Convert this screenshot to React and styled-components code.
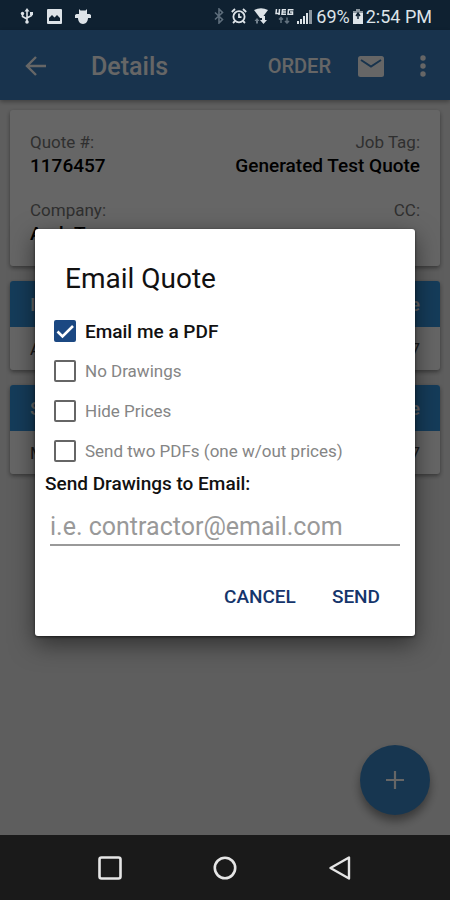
import React, { useState } from 'react';
import styled, { createGlobalStyle } from 'styled-components';

const GlobalStyle = createGlobalStyle`
  * {
    box-sizing: border-box;
  }

  body {
    margin: 0;
    font-family: Roboto, 'Liberation Sans', sans-serif;
    background: #ebebeb;
  }

  button, input {
    font-family: inherit;
  }
`;

const Screen = styled.div`
  display: flex;
  flex-direction: column;
  min-height: 100vh;
`;

const StatusBar = styled.header`
  display: flex;
  align-items: center;
  justify-content: space-between;
  height: 30px;
  padding: 2px 18px 0 20px;
  background: #0f2131;
  color: #dde3e8;
  font-size: 18px;
`;

const StatusGroup = styled.div`
  display: flex;
  align-items: center;
  gap: ${props => props.$gap};

  svg {
    display: block;
  }
`;

const Content = styled.div`
  position: relative;
  display: flex;
  flex: 1;
  flex-direction: column;
  background: #ebebeb;
`;

const AppBar = styled.div`
  display: flex;
  align-items: center;
  height: 70px;
  padding: 2px 11px 0 20px;
  background: #3c80c0;
  color: #fff;
  box-shadow: 0 2px 4px rgba(0, 0, 0, .3);
`;

const IconButton = styled.button`
  display: flex;
  align-items: center;
  justify-content: center;
  width: 32px;
  height: 48px;
  padding: 0;
  border: 0;
  background: none;
  color: inherit;
`;

const PageTitle = styled.h1`
  flex: 1;
  margin: 0 0 0 39px;
  font-size: 25px;
  font-weight: 500;
`;

const BarActions = styled.div`
  display: flex;
  align-items: center;
  gap: 20px;
`;

const OrderButton = styled.button`
  padding: 0 4px;
  border: 0;
  background: none;
  color: inherit;
  font-size: 20px;
  font-weight: 500;
`;

const Cards = styled.main`
  display: flex;
  flex-direction: column;
  gap: 15px;
  padding: 10px;
`;

const Card = styled.section`
  overflow: hidden;
  border-radius: 3px;
  background: #fff;
  box-shadow: 0 2px 4px rgba(0, 0, 0, .4);
`;

const Fields = styled.dl`
  display: grid;
  grid-template-columns: auto auto;
  justify-content: space-between;
  row-gap: 20px;
  margin: 0;
  padding: 20px;
`;

const Field = styled.div`
  min-height: 48px;
  text-align: ${props => props.$align || 'left'};
`;

const FieldLabel = styled.dt`
  color: #777;
  font-size: 17px;
  line-height: 24px;
`;

const FieldValue = styled.dd`
  margin: 0;
  color: #000;
  font-size: 19px;
  font-weight: 500;
  line-height: 24px;
`;

const CardRow = styled.div`
  display: flex;
  align-items: center;
  justify-content: space-between;
  height: 43px;
  padding: 0 20px;
  color: #444;
  font-size: 17px;
`;

const CardHead = styled(CardRow)`
  height: 46px;
  background: #3696e2;
  color: #fff;
  font-size: 19px;
  font-weight: 500;
`;

const AddButton = styled.button`
  position: absolute;
  right: 20px;
  bottom: 20px;
  display: flex;
  align-items: center;
  justify-content: center;
  width: 70px;
  height: 70px;
  border: 0;
  border-radius: 50%;
  background: #3a88c8;
  color: #fff;
  box-shadow: 0 6px 10px rgba(0, 0, 0, .4);
`;

const Scrim = styled.div`
  position: absolute;
  inset: 0;
  display: flex;
  align-items: center;
  justify-content: center;
  padding: 0 35px;
  background: rgba(0, 0, 0, .6);
`;

const Dialog = styled.form`
  width: 100%;
  max-width: 480px;
  padding: 30px 15px 20px 10px;
  border-radius: 3px;
  background: #fff;
  color: #111;
  box-shadow: 0 8px 24px rgba(0, 0, 0, .5), 0 1px 3px rgba(0, 0, 0, .6);
`;

const DialogTitle = styled.h2`
  margin: 0 0 12px 20px;
  font-size: 28px;
  font-weight: 400;
  line-height: 40px;
`;

const Option = styled.label`
  display: flex;
  align-items: center;
  gap: 9px;
  height: 40px;
  padding-left: 9px;
  color: ${props => (props.$main ? '#111' : '#858585')};
  font-size: ${props => (props.$main ? '19px' : '17px')};
  font-weight: ${props => (props.$main ? 500 : 400)};
`;

const Checkbox = styled.input`
  appearance: none;
  flex: none;
  width: 22px;
  height: 22px;
  margin: 0;
  border: 2px solid #666;
  border-radius: 2px;

  &:checked {
    border-color: #1b4882;
    background: #1b4882 url("data:image/svg+xml,%3Csvg xmlns='http://www.w3.org/2000/svg' viewBox='0 0 18 18'%3E%3Cpath d='M1.5 9.5l5 5L17 4' fill='none' stroke='white' stroke-width='2.6'/%3E%3C/svg%3E");
  }
`;

const EmailLabel = styled.label`
  display: block;
  font-size: 19px;
  font-weight: 500;
  line-height: 26px;
`;

const EmailInput = styled.input`
  display: block;
  width: calc(100% - 5px);
  height: 49px;
  margin-left: 5px;
  padding: 12px 0 0;
  border: 0;
  border-bottom: 2px solid #999;
  border-radius: 0;
  outline: none;
  background: none;
  font-size: 25px;

  &::placeholder {
    color: #999;
    opacity: 1;
  }
`;

const Actions = styled.div`
  display: flex;
  justify-content: flex-end;
  gap: 16px;
  margin-top: 30px;
  padding-right: 10px;
`;

const ActionButton = styled.button`
  height: 40px;
  padding: 0 10px;
  border: 0;
  background: none;
  color: #15356b;
  font-size: 19px;
  font-weight: 500;
`;

const NavBar = styled.nav`
  display: flex;
  align-items: center;
  justify-content: center;
  gap: 83px;
  height: 65px;
  background: #1a1a1a;
  color: #e6e6e6;
`;

const options = [
  { id: 'pdf', label: 'Email me a PDF', main: true },
  { id: 'noDrawings', label: 'No Drawings' },
  { id: 'hidePrices', label: 'Hide Prices' },
  { id: 'twoPdfs', label: 'Send two PDFs (one w/out prices)' },
];

const UsbIcon = () => (
  <svg width="14" height="16" viewBox="0 0 14 16" fill="none" stroke="currentColor" strokeWidth="1.6">
    <path d="M7 2v12M2.5 6v2.5L7 11M11.5 6v1.5L7 10" />
    <path d="M7 0l2.5 3.5h-5z" fill="currentColor" stroke="none" />
    <circle cx="7" cy="14" r="1.8" fill="currentColor" stroke="none" />
    <circle cx="2.5" cy="5.5" r="1.7" fill="currentColor" stroke="none" />
    <path d="M10 4h3v3h-3z" fill="currentColor" stroke="none" />
  </svg>
);

const PictureIcon = () => (
  <svg width="15" height="15" viewBox="0 0 15 15">
    <rect width="15" height="15" rx="1" fill="currentColor" />
    <path d="M2 12V9l3-3 2.5 2.5L10 6l3 3v3z" fill="#0f2131" />
  </svg>
);

const DroidIcon = () => (
  <svg width="16" height="15" viewBox="0 0 16 15" fill="currentColor">
    <path d="M4 0l1.5 1.5h5L12 0v5h2.5l1.5 1v3h-3c0 3-2 6-5 6s-5-3-5-6H0V6l1.5-1H4z" />
  </svg>
);

const BluetoothIcon = () => (
  <svg width="10" height="16" viewBox="0 0 10 16" fill="none" stroke="#5d6d7b" strokeWidth="1.6">
    <path d="M1 4.5l7.5 7L5 15V1l3.5 3.5-7.5 7" />
  </svg>
);

const AlarmIcon = () => (
  <svg width="16" height="16" viewBox="0 0 16 16" fill="none" stroke="currentColor" strokeWidth="1.8">
    <circle cx="8" cy="8.7" r="5.6" />
    <path d="M8 5.5v3.7h2.5M.8 4L4 1M15.2 4L12 1M4 13l-2 2M12 13l2 2" />
  </svg>
);

const WifiIcon = () => (
  <svg width="14" height="16" viewBox="0 0 14 16">
    <path d="M0 2q7-3.5 14 0L8 10H6z" fill="currentColor" />
    <path d="M3 10l2.5 3H4v2.5H2V13H.5z" fill="#73818d" />
    <path d="M8 8h3v4h2l-3.500 4L6 12h2z" fill="currentColor" />
  </svg>
);

const LteIcon = () => (
  <svg width="19" height="16" viewBox="0 0 19 16" fill="none" stroke="currentColor" strokeWidth="1.5">
    <path d="M1.5 1L1 5.500h4M4.500 1L4 7M11 1.800H7.500L7 6.200h4M7.500 4H11M18.500 1.800h-5L13 6.200h4.500V4H15" />
    <path d="M6 9.500V15M4 11.500l2-2 2 2M12 9.500V15M10 13l2 2 2-2" stroke="#62717e" />
  </svg>
);

const SignalIcon = () => (
  <svg width="16" height="15" viewBox="0 0 16 15" fill="currentColor">
    <path d="M0 12h2v3H0zM3 10h2v5H3zM6 7h2v8H6zM9 4h2v11H9z" />
    <path d="M12 1h3v14h-3z" opacity=".6" />
  </svg>
);

const BatteryIcon = () => (
  <svg width="10" height="15" viewBox="0 0 10 15">
    <path d="M3 0h4v2h3v13H0V2h3z" fill="currentColor" />
    <path d="M0 2h3V0h4v2h3v2H0z" fill="#8b969f" />
    <path d="M5 4v6M3 7l2-3 2 3" fill="none" stroke="#0f2131" strokeWidth="1.4" />
  </svg>
);

const BackIcon = () => (
  <svg width="22" height="20" viewBox="0 0 22 20" fill="none" stroke="currentColor" strokeWidth="2.4">
    <path d="M21 10H2M11 1l-9 9 9 9" />
  </svg>
);

const MailIcon = () => (
  <svg width="26" height="21" viewBox="0 0 26 21">
    <rect width="26" height="21" rx="2.5" fill="currentColor" />
    <path d="M3 4l10 6.5L23 4" fill="none" stroke="#3c80c0" strokeWidth="2" />
  </svg>
);

const MoreIcon = () => (
  <svg width="6" height="22" viewBox="0 0 6 22" fill="currentColor">
    <circle cx="3" cy="3" r="2.7" />
    <circle cx="3" cy="11" r="2.7" />
    <circle cx="3" cy="19" r="2.7" />
  </svg>
);

const PlusIcon = () => (
  <svg width="18" height="18" viewBox="0 0 18 18" stroke="currentColor" strokeWidth="2.2">
    <path d="M9 0v18M0 9h18" />
  </svg>
);

const RecentsIcon = () => (
  <svg width="24" height="24" viewBox="0 0 24 24" fill="none" stroke="currentColor" strokeWidth="2.6">
    <rect x="1.5" y="1.5" width="21" height="21" rx="2" />
  </svg>
);

const HomeIcon = () => (
  <svg width="24" height="24" viewBox="0 0 24 24" fill="none" stroke="currentColor" strokeWidth="2.6">
    <circle cx="12" cy="12" r="10.2" />
  </svg>
);

const NavBackIcon = () => (
  <svg width="22" height="24" viewBox="0 0 22 24" fill="none" stroke="currentColor" strokeWidth="2.4" strokeLinejoin="round">
    <path d="M20 1.5v21L1.5 12z" />
  </svg>
);

const PriceCard = ({ title, item, amount }) => (
  <Card>
    <CardHead>
      <span>{title}</span>
      <span>Price</span>
    </CardHead>
    <CardRow>
      <span>{item}</span>
      <span>{amount}</span>
    </CardRow>
  </Card>
);

export default () => {
  const [checked, setChecked] = useState({ pdf: true });
  const toggle = id => setChecked({ ...checked, [id]: !checked[id] });

  return (
    <Screen>
      <GlobalStyle />
      <StatusBar>
        <StatusGroup $gap="13px">
          <UsbIcon />
          <PictureIcon />
          <DroidIcon />
        </StatusGroup>
        <StatusGroup $gap="3px">
          <StatusGroup $gap="7px">
            <BluetoothIcon />
            <AlarmIcon />
            <WifiIcon />
            <LteIcon />
          </StatusGroup>
          <SignalIcon />
          <span>69%</span>
          <BatteryIcon />
          <span>2:54 PM</span>
        </StatusGroup>
      </StatusBar>

      <Content>
        <AppBar>
          <IconButton aria-label="Back"><BackIcon /></IconButton>
          <PageTitle>Details</PageTitle>
          <BarActions>
            <OrderButton>ORDER</OrderButton>
            <IconButton aria-label="Email"><MailIcon /></IconButton>
            <IconButton aria-label="More"><MoreIcon /></IconButton>
          </BarActions>
        </AppBar>

        <Cards>
          <Card>
            <Fields>
              <Field>
                <FieldLabel>Quote #:</FieldLabel>
                <FieldValue>1176457</FieldValue>
              </Field>
              <Field $align="right">
                <FieldLabel>Job Tag:</FieldLabel>
                <FieldValue>Generated Test Quote</FieldValue>
              </Field>
              <Field>
                <FieldLabel>Company:</FieldLabel>
                <FieldValue>Arch T</FieldValue>
              </Field>
              <Field $align="right">
                <FieldLabel>CC:</FieldLabel>
              </Field>
            </Fields>
          </Card>
          <PriceCard title="I" item="A" amount="7" />
          <PriceCard title="S" item="M" amount="7" />
        </Cards>

        <AddButton aria-label="Add"><PlusIcon /></AddButton>

        <Scrim>
          <Dialog role="dialog" aria-labelledby="dialog-title" onSubmit={e => e.preventDefault()}>
            <DialogTitle id="dialog-title">Email Quote</DialogTitle>
            {options.map(({ id, label, main }) => (
              <Option key={id} $main={main}>
                <Checkbox type="checkbox" checked={!!checked[id]} onChange={() => toggle(id)} />
                {label}
              </Option>
            ))}
            <EmailLabel htmlFor="email">Send Drawings to Email:</EmailLabel>
            <EmailInput id="email" type="email" placeholder="i.e. contractor@email.com" />
            <Actions>
              <ActionButton type="button">CANCEL</ActionButton>
              <ActionButton type="submit">SEND</ActionButton>
            </Actions>
          </Dialog>
        </Scrim>
      </Content>

      <NavBar>
        <IconButton aria-label="Recent apps"><RecentsIcon /></IconButton>
        <IconButton aria-label="Home"><HomeIcon /></IconButton>
        <IconButton aria-label="Previous screen"><NavBackIcon /></IconButton>
      </NavBar>
    </Screen>
  );
};
